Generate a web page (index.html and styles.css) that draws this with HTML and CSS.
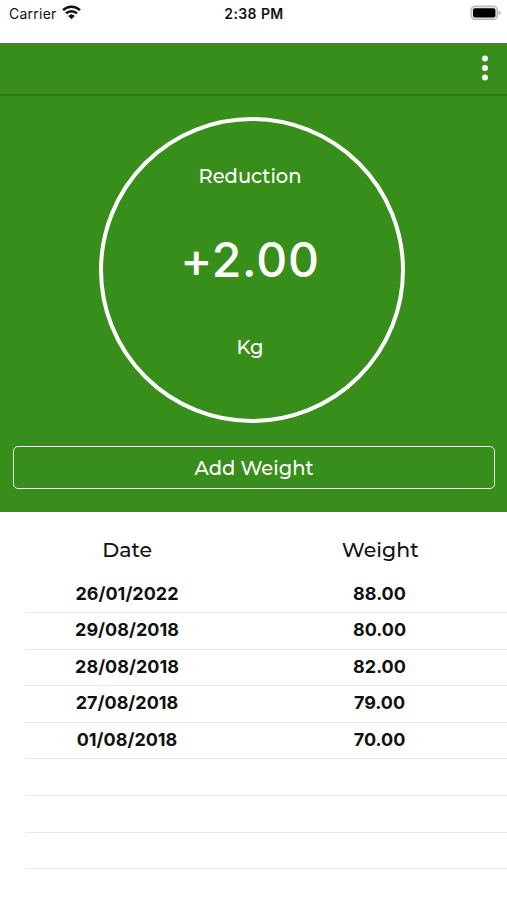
FILE: index.html
```html
<!DOCTYPE html>
<html lang="en">
<head>
<meta charset="UTF-8">
<meta name="viewport" content="width=device-width, initial-scale=1.0">
<title>Weight</title>
<link rel="stylesheet" href="styles.css">
</head>
<body>
<div class="status">
    <div class="carrier">
        <span>Carrier</span>
        <svg class="wifi" width="19" height="15" viewBox="0 0 19 15">
            <path d="M1 5.2a12.2 12.2 0 0 1 17 0M4 8.4a8 8 0 0 1 11 0" fill="none" stroke="#111" stroke-width="2.5"/>
            <path d="M6.2 10.9a4.8 4.8 0 0 1 6.6 0L9.5 14.3z" fill="#111"/>
        </svg>
    </div>
    <div class="time">2:38 PM</div>
    <svg class="battery" width="31" height="16" viewBox="0 0 31 16">
        <rect x="1" y="1.2" width="26.4" height="13.2" rx="4" fill="#e4e4e4" stroke="#b4b4b4" stroke-width="1.3"/>
        <rect x="3" y="3.3" width="22.4" height="9.2" rx="2" fill="#000"/>
        <path d="M28.7 5.5q2 .7 2 2.3t-2 2.3z" fill="#b4b4b4"/>
    </svg>
</div>
<div class="toolbar">
    <svg class="menu" width="8" height="26" viewBox="0 0 8 26" fill="#fff">
        <circle cx="4" cy="3.6" r="3"/>
        <circle cx="4" cy="13" r="3"/>
        <circle cx="4" cy="22.4" r="3"/>
    </svg>
</div>
<div class="summary">
    <div class="ring">
        <div class="label">Reduction</div>
        <div class="value">+2.00</div>
        <div class="unit">Kg</div>
    </div>
    <button class="add">Add Weight</button>
</div>
<div class="head">
    <div class="head-date">Date</div>
    <div class="head-weight">Weight</div>
</div>
<div class="list">
    <div class="row"><div class="date">26/01/2022</div><div class="weight">88.00</div></div>
    <div class="row"><div class="date">29/08/2018</div><div class="weight">80.00</div></div>
    <div class="row"><div class="date">28/08/2018</div><div class="weight">82.00</div></div>
    <div class="row"><div class="date">27/08/2018</div><div class="weight">79.00</div></div>
    <div class="row"><div class="date">01/08/2018</div><div class="weight">70.00</div></div>
    <div class="row"></div>
    <div class="row"></div>
    <div class="row"></div>
</div>
</body>
</html>
```
FILE: styles.css
```css
* {
    box-sizing: border-box;
}
body {
    margin: 0;
    height: 900px;
    overflow: hidden;
    background: #fff;
    color: #111;
    font-family: Montserrat, Inter, "Liberation Sans", sans-serif;
}
.status {
    display: grid;
    grid-template-columns: 1fr auto 1fr;
    height: 43px;
    padding: 5px 6px 0 9px;
    font-family: Inter, sans-serif;
    font-size: 14px;
    line-height: 18px;
}
.carrier {
    display: flex;
    gap: 5px;
    letter-spacing: 0.25px;
}
.time {
    padding-right: 2px;
    font-weight: 600;
    letter-spacing: 0.4px;
}
.battery {
    justify-self: end;
}
.toolbar {
    display: flex;
    justify-content: flex-end;
    height: 53px;
    padding: 12px 18px 0 0;
    background: #388e1a;
    border-bottom: 2px solid #317c17;
}
.summary {
    height: 416px;
    padding: 21px 13px 0;
    background: #388e1a;
    color: #fff;
}
.ring {
    width: 306px;
    height: 306px;
    margin-left: 85.5px;
    padding-top: 42px;
    padding-right: 3px;
    border: 4px solid #fff;
    border-radius: 50%;
    text-align: center;
    font-weight: 500;
}
.label,
.unit {
    font-size: 19.5px;
    line-height: 26px;
}
.value {
    margin: 41px 0 44px;
    font-family: Inter, sans-serif;
    font-size: 48px;
    line-height: 60px;
    letter-spacing: 0.8px;
}
.add {
    display: block;
    width: 482px;
    height: 43px;
    margin-top: 23px;
    padding: 0;
    background: none;
    border: 1.5px solid #e4f3df;
    border-radius: 5px;
    color: #fff;
    font-family: inherit;
    font-size: 19.5px;
    font-weight: 500;
}
.head {
    display: grid;
    grid-template-columns: 1fr 1fr;
    height: 64.5px;
    padding-top: 25px;
    font-size: 20.5px;
    font-weight: 500;
    line-height: 26px;
    text-align: center;
}
.head-date {
    padding-left: 1px;
}
.list {
    padding-left: 25px;
}
.row {
    display: grid;
    grid-template-columns: 228px 1fr;
    height: 36.6px;
    padding-right: 1px;
    border-bottom: 1px solid #e8e8e8;
    font-family: Inter, sans-serif;
    font-size: 18px;
    font-weight: 700;
    line-height: 34px;
    text-align: center;
}
.date {
    padding-right: 24px;
}
```
